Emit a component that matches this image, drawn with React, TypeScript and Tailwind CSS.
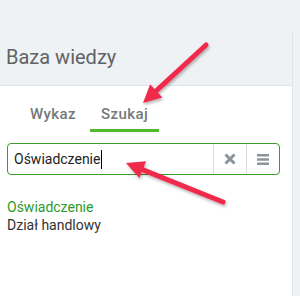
import React from 'react';

type Pt = [number, number];

const Arrow = ({ from, to }: { from: Pt; to: Pt }) => {
  const dx = to[0] - from[0];
  const dy = to[1] - from[1];
  const len = Math.hypot(dx, dy);
  const ux = dx / len;
  const uy = dy / len;
  // arrow head: length 18, half width 9
  const bx = to[0] - ux * 18;
  const by = to[1] - uy * 18;
  const head = [
    `${to[0]},${to[1]}`,
    `${bx - uy * 9},${by + ux * 9}`,
    `${bx + uy * 9},${by - ux * 9}`,
  ].join(' ');
  return (
    <g filter="url(#shadow)">
      <line x1={from[0]} y1={from[1]} x2={bx + ux * 3} y2={by + uy * 3} stroke="#f02a4c" strokeWidth={5} strokeLinecap="round" />
      <polygon points={head} fill="#f02a4c" />
    </g>
  );
};

const App = () => {
  return (
    <div className="relative w-[300px] h-[296px] bg-[#eff2f4] overflow-hidden font-['Roboto',sans-serif]">
      <div className="pt-[32px] h-full">
        <div className="w-[293px] h-full border-r border-[#e1e4e7] flex flex-col">
          {/* header */}
          <div className="h-[54px] border-b border-[#e1e4e7] pt-[11px] pl-[6px]">
            <h1 className="text-[20px] leading-[28px] text-[#5f6366]">Baza wiedzy</h1>
          </div>

          {/* body */}
          <div className="flex-1 bg-white pl-[7px]">
            <div className="flex gap-[3px] pl-[12px] mt-[18px]">
              <div className="px-[11px] pb-[5px] border-b-[3px] border-transparent text-[15px] leading-[20px] font-medium tracking-[0.4px] text-[#75797c]">
                Wykaz
              </div>
              <div className="px-[11px] pb-[5px] border-b-[3px] border-[#52b82c] text-[15px] leading-[20px] font-medium tracking-[0.4px] text-[#75797c]">
                Szukaj
              </div>
            </div>

            <div className="mt-[11px] w-[273px] h-[32px] flex border border-[#3a9e28] rounded-[4px]">
              <div className="flex-1 flex items-center pl-[6px] text-[14px] text-[#222]">
                <span>Oświadczenie</span>
                <span className="ml-[1px] w-[1px] h-[19px] bg-black" />
              </div>
              <div className="w-[33px] border-l border-[#dcdcdc] flex items-center justify-center">
                <svg width="12" height="12" viewBox="0 0 12 12">
                  <path d="M1.5 1.5 L10.5 10.5 M10.5 1.5 L1.5 10.5" stroke="#8a9499" strokeWidth="3" />
                </svg>
              </div>
              <div className="w-[33px] border-l border-[#dcdcdc] flex items-center justify-center">
                <svg width="12" height="11" viewBox="0 0 12 11">
                  <rect x="0" y="0" width="12" height="2.5" fill="#8d9599" />
                  <rect x="0" y="4.25" width="12" height="2.5" fill="#8d9599" />
                  <rect x="0" y="8.5" width="12" height="2.5" fill="#8d9599" />
                </svg>
              </div>
            </div>

            <div className="mt-[23px] text-[14px] leading-[18px]">
              <div className="text-[#2e9a2a]">Oświadczenie</div>
              <div className="text-[#333]">Dział handlowy</div>
            </div>
          </div>
        </div>
      </div>

      {/* annotation arrows */}
      <svg className="absolute inset-0 pointer-events-none" width="300" height="296">
        <defs>
          <filter id="shadow" x="-20%" y="-20%" width="140%" height="140%">
            <feDropShadow dx="1" dy="2" stdDeviation="1.5" floodColor="#000" floodOpacity="0.3" />
          </filter>
        </defs>
        <Arrow from={[206, 45]} to={[143, 103]} />
        <Arrow from={[223, 202]} to={[126, 163]} />
      </svg>
    </div>
  );
};

export default App;
